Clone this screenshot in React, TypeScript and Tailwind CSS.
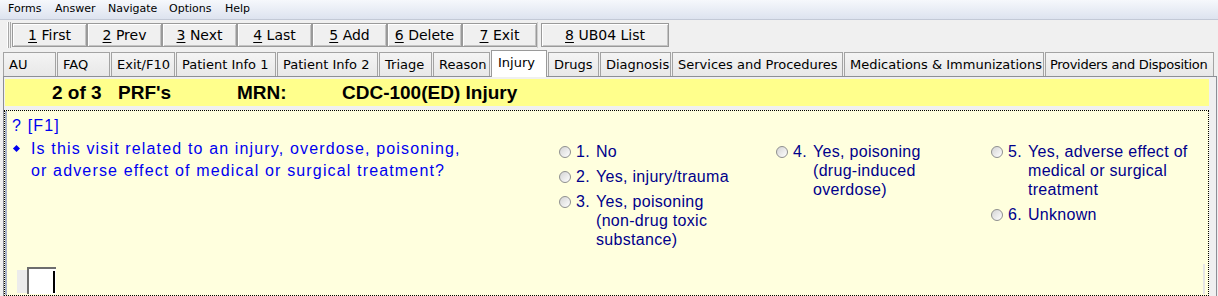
import React from "react";

const menus = [
  { label: "Forms", w: 47 },
  { label: "Answer", w: 53 },
  { label: "Navigate", w: 61 },
  { label: "Options", w: 56 },
  { label: "Help", w: 40 },
];

const buttons = [
  ["1", "First"],
  ["2", "Prev"],
  ["3", "Next"],
  ["4", "Last"],
  ["5", "Add"],
  ["6", "Delete"],
  ["7", "Exit"],
];

const tabs = [
  { label: "AU", w: 54 },
  { label: "FAQ", w: 54 },
  { label: "Exit/F10", w: 65 },
  { label: "Patient Info 1", w: 101 },
  { label: "Patient Info 2", w: 102 },
  { label: "Triage", w: 54 },
  { label: "Reason", w: 58 },
  { label: "Injury", w: 57, active: true },
  { label: "Drugs", w: 52 },
  { label: "Diagnosis", w: 72 },
  { label: "Services and Procedures", w: 172 },
  { label: "Medications & Immunizations", w: 201 },
  { label: "Providers and Disposition", w: 170, tight: true },
];

type Opt = { n: string; lines: string[] };

const columns: Opt[][] = [
  [
    { n: "1.", lines: ["No"] },
    { n: "2.", lines: ["Yes, injury/trauma"] },
    { n: "3.", lines: ["Yes, poisoning", "(non-drug toxic", "substance)"] },
  ],
  [{ n: "4.", lines: ["Yes, poisoning", "(drug-induced", "overdose)"] }],
  [
    { n: "5.", lines: ["Yes, adverse effect of", "medical or surgical", "treatment"] },
    { n: "6.", lines: ["Unknown"] },
  ],
];

function ToolButton({ num, label, width }: { num: string; label: string; width: string }) {
  return (
    <button
      className={`${width} h-[24px] flex items-center justify-center border border-[#9a9a9a] bg-[#f0f0f0] shadow-[inset_1px_1px_0_#ffffff,inset_-1px_-1px_0_#c4c4c4] text-[14px] text-black`}
    >
      <span className="underline underline-offset-2">{num}</span>
      <span>&nbsp;{label}</span>
    </button>
  );
}

function Radio() {
  return (
    <div className="h-[19px] flex items-center">
      <div className="w-[12px] h-[12px] rounded-full border border-[#8e8f8f] bg-linear-to-br from-[#d4d4d4] to-white" />
    </div>
  );
}

export default function App() {
  return (
    <div className="w-[1218px] h-[296px] overflow-hidden bg-[#f0f0f0] font-['DejaVu_Sans',sans-serif] flex flex-col">
      {/* Menu bar */}
      <div className="h-[20px] shrink-0 flex items-center pl-[8px] bg-linear-to-b from-[#f6f8fc] to-[#dde3ef] border-b border-[#c3c9d6] text-[11px] text-black">
        {menus.map((m) => (
          <span key={m.label} style={{ width: m.w }}>
            {m.label}
          </span>
        ))}
      </div>

      {/* Toolbar */}
      <div className="h-[30px] shrink-0 flex items-start pt-[3px] pl-[7px]">
        <div className="w-[4px] h-[26px] -mt-[1px] mr-[1px] border-l border-r border-l-white border-r-[#a8a8a8] shadow-[inset_1px_0_0_#a8a8a8]" />
        {buttons.map(([n, l]) => (
          <ToolButton key={n} num={n} label={l} width="w-[75px]" />
        ))}
        <div className="w-[4px] h-[26px] -mt-[1px] border-l border-[#d0d0d0]" />
        <ToolButton num="8" label="UB04 List" width="w-[128px]" />
      </div>

      {/* Tabs */}
      <div className="h-[26px] shrink-0 flex items-end pl-[3px] text-[13px] text-black relative z-10">
        {tabs.map((t) =>
          t.active ? (
            <div
              key={t.label}
              style={{ width: t.w - 1 }}
              className="h-[27px] -mb-[1px] mr-[1px] bg-white border border-b-0 border-[#9a9a9a] pl-[6px] pb-[3px] flex items-center whitespace-nowrap"
            >
              {t.label}
            </div>
          ) : (
            <div
              key={t.label}
              style={{ width: t.w - 1 }}
              className={`h-[24px] mr-[1px] bg-linear-to-b from-[#f4f4f4] to-[#e8e8e8] border border-b-0 border-[#a3a3a3] flex items-center whitespace-nowrap overflow-hidden ${t.tight ? "pl-[4px] tracking-[-0.3px]" : "pl-[5px]"}`}
            >
              {t.label}
            </div>
          )
        )}
      </div>

      {/* Tab panel */}
      <div className="flex-1 ml-[3px] w-[1214px] border border-b-0 border-[#8c8f96] pt-[2px] flex flex-col font-['Liberation_Sans',Arial,sans-serif]">
        <div className="ml-[1px] w-[1204px] h-[27px] shrink-0 bg-[#ffff8c] flex items-center pl-[47px] text-[19px] font-bold text-black leading-[27px]">
          <span className="w-[66px]">2 of 3</span>
          <span className="w-[119px]">PRF's</span>
          <span className="w-[105px]">MRN:</span>
          <span>CDC-100(ED) Injury</span>
        </div>

        <div className="mt-[4px] w-[1205px] h-[186px] shrink-0 border border-dotted border-black bg-[#ffffde] flex flex-col">
          <div className="flex-1 border-l-2 border-[#a9b3c9] flex flex-col">
            <div className="pl-[5px] pt-[5px]">
              <div className="text-[16px] leading-[20px] tracking-[1.15px] text-[#0000f0]">? [F1]</div>
              <div className="flex mt-[2px]">
                <div className="w-[547px] flex text-[16px] leading-[22px] tracking-[1.15px] text-[#0000f0]">
                  <div className="w-[19px] pt-[8px] pl-[2px]">
                    <div className="w-[5px] h-[5px] rotate-45 bg-[#0000f0]" />
                  </div>
                  <div className="whitespace-nowrap">
                    Is this visit related to an injury, overdose, poisoning,
                    <br />
                    or adverse effect of medical or surgical treatment?
                  </div>
                </div>
                <div className="flex pt-[4px] text-[16px] leading-[19px] tracking-[0.3px] text-[#00008b]">
                  {columns.map((col, ci) => (
                    <div key={ci} className={`flex flex-col gap-[6px] ${ci === 0 ? "w-[217px]" : ci === 1 ? "w-[215px]" : "w-[200px]"}`}>
                      {col.map((o) => (
                        <div key={o.n} className="flex items-start">
                          <Radio />
                          <span className="ml-[5px] w-[20px]">{o.n}</span>
                          <div className="whitespace-nowrap">
                            {o.lines.map((l, i) => (
                              <div key={i}>{l}</div>
                            ))}
                          </div>
                        </div>
                      ))}
                    </div>
                  ))}
                </div>
              </div>
            </div>

            <div className="mt-auto flex items-end pb-[1px]">
              <div className="ml-[10px] w-[10px] h-[23px] mb-[1px] bg-[#ececec]" />
              <div className="w-[29px] h-[27px] bg-white border-t-2 border-l-2 border-[#6d6d6d] flex justify-end items-center pr-[1px]">
                <div className="w-[2px] h-[22px] bg-black" />
              </div>
              <div className="ml-auto mr-[3px] w-[2px] h-[30px] bg-[#e6e6e6]" />
            </div>
          </div>
        </div>
      </div>
    </div>
  );
}
